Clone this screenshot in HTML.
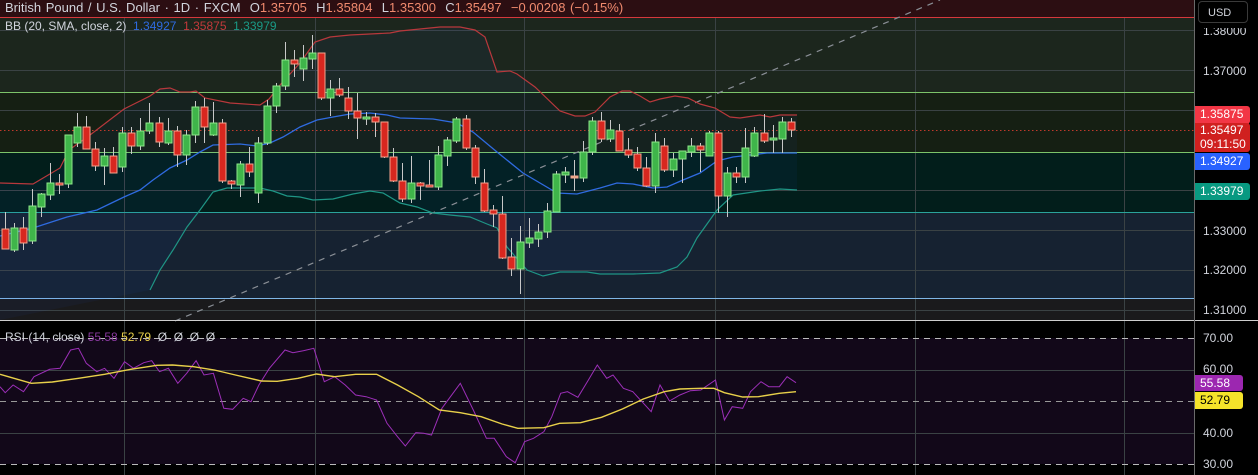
<!DOCTYPE html>
<html><head><meta charset="utf-8">
<style>
html,body{margin:0;padding:0;background:#000;width:1258px;height:475px;overflow:hidden;font-family:"Liberation Sans",sans-serif;}
#w{position:relative;width:1258px;height:475px;}
svg{position:absolute;left:0;top:0;}
.t{position:absolute;font-size:12px;color:#d1d4dc;white-space:nowrap;line-height:14px;}
.ax{position:absolute;left:1203px;font-size:12px;color:#d1d4dc;line-height:14px;}
.tag{position:absolute;left:1195px;width:55px;font-size:12px;color:#fff;padding-left:5px;box-sizing:border-box;border-radius:0 3px 3px 0;line-height:17px;}
</style></head><body><div id="w">
<svg id="s" width="1258" height="475" xmlns="http://www.w3.org/2000/svg">
<rect x="0" y="0" width="1258" height="475" fill="#000"/>
<rect x="0" y="0" width="1194" height="17" fill="#2c0e12"/>
<rect x="0" y="17" width="1194" height="75" fill="#1c261d"/>
<rect x="0" y="92" width="1194" height="60" fill="#151f13"/>
<rect x="0" y="152" width="1194" height="60" fill="#021e1b"/>
<rect x="0" y="212" width="1194" height="86" fill="#162231"/>
<rect x="0" y="298" width="1194" height="23" fill="#1a1a1c"/>
<rect x="0" y="338" width="1194" height="126" fill="#120819"/>
<g id="grid" stroke="#3a4244" stroke-width="1"></g>
<line x1="0" y1="17.5" x2="1194" y2="17.5" stroke="#d6383c"/>
<line x1="0" y1="92.5" x2="1194" y2="92.5" stroke="#7cc46a"/>
<line x1="0" y1="152.5" x2="1194" y2="152.5" stroke="#7cc46a"/>
<line x1="0" y1="212.5" x2="1194" y2="212.5" stroke="#2aa39a"/>
<line x1="0" y1="298.5" x2="1194" y2="298.5" stroke="#7fb6e6"/>
<path id="fill" fill="rgba(41,98,255,0.05)" stroke="none"/>
<line x1="175" y1="321" x2="940" y2="0" stroke="#8a8f96" stroke-dasharray="6,6" stroke-width="1.2"/>
<line x1="0" y1="130.5" x2="1194" y2="130.5" stroke="#c0392b" stroke-dasharray="1.5,2.5"/>
<polyline id="up" fill="none" stroke="#b8383c" stroke-width="1.2"/>
<polyline id="mid" fill="none" stroke="#2f6be0" stroke-width="1.3"/>
<polyline id="lo" fill="none" stroke="#1f9585" stroke-width="1.2"/>
<g id="c"></g>
<line x1="0" y1="338.5" x2="1194" y2="338.5" stroke="#bbb" stroke-dasharray="6,5"/>
<line x1="0" y1="401.5" x2="1194" y2="401.5" stroke="#999" stroke-dasharray="6,5"/>
<line x1="0" y1="464.5" x2="1194" y2="464.5" stroke="#bbb" stroke-dasharray="6,5"/>
<polyline id="rsi" fill="none" stroke="#9c2fb8" stroke-width="1"/>
<polyline id="ma" fill="none" stroke="#e8d04a" stroke-width="1.4"/>
<line x1="0" y1="320.5" x2="1258" y2="320.5" stroke="#cfcfcf"/>
<line x1="1194.5" y1="0" x2="1194.5" y2="475" stroke="#6a6a6a"/>
</svg>
<div class="t" style="left:5px;top:1px;font-size:13px;word-spacing:1px;">British Pound / U.S. Dollar · 1D · FXCM &nbsp;O<span style="color:#f08a6e">1.35705</span> &nbsp;H<span style="color:#f08a6e">1.35804</span> &nbsp;L<span style="color:#f08a6e">1.35300</span> &nbsp;C<span style="color:#f08a6e">1.35497</span> &nbsp;<span style="color:#f08a6e">−0.00208 (−0.15%)</span></div>
<div class="t" style="left:5px;top:19px;">BB (20, SMA, close, 2) &nbsp;<span style="color:#2f6be0">1.34927</span> &nbsp;<span style="color:#c3393b">1.35875</span> &nbsp;<span style="color:#1a9a86">1.33979</span></div>
<div class="t" style="left:5px;top:330px;font-size:12px;">RSI (14, close) <span style="color:#8a3aa0">55.58</span> <span style="color:#e8d04a">52.79</span> &nbsp;Ø &nbsp;Ø &nbsp;Ø &nbsp;Ø</div>
<div style="position:absolute;left:1198px;top:1px;width:50px;height:22px;border:1px solid #3a3a3a;border-radius:4px;background:#000;color:#d1d4dc;font-size:11px;line-height:22px;padding-left:9px;box-sizing:border-box;">USD</div>
<div class="ax" style="top:24px;clip-path:inset(4px 0 0 0);">1.38000</div>
<div class="ax" style="top:64px;">1.37000</div>
<div class="ax" style="top:224px;">1.33000</div>
<div class="ax" style="top:263px;">1.32000</div>
<div class="ax" style="top:303px;">1.31000</div>
<div class="tag" style="top:106px;height:18px;background:#f23645;">1.35875</div>
<div class="tag" style="top:123px;height:29px;background:#d0201f;line-height:13.5px;padding-top:1px;">1.35497<br>09:11:50</div>
<div class="tag" style="top:153px;height:17px;background:#2962ff;">1.34927</div>
<div class="tag" style="top:183px;height:17px;background:#089981;">1.33979</div>
<div class="ax" style="top:331px;">70.00</div>
<div class="ax" style="top:362px;">60.00</div>
<div class="tag" style="top:375px;height:16px;background:#9c27b0;line-height:16px;width:48px;">55.58</div>
<div class="tag" style="top:392px;height:17px;background:#f5e32a;color:#000;width:48px;">52.79</div>
<div class="ax" style="top:426px;">40.00</div>
<div class="ax" style="top:457px;">30.00</div>
</div>
<script>
var NS="http://www.w3.org/2000/svg";
function el(p,t,a){var e=document.createElementNS(NS,t);for(var k in a)e.setAttribute(k,a[k]);p.appendChild(e);return e;}
var g=document.getElementById('grid');
[30,70,110,190,230,270,310,370,433].forEach(function(y){el(g,'line',{x1:0,x2:1194,y1:y+.5,y2:y+.5});});
[124,315,524,715,915,1124].forEach(function(x){el(g,'line',{x1:x+.5,x2:x+.5,y1:17,y2:475});});
var C=[[229,249,212,249,'r'],[228,250,223,252,'g'],[228,243,217,250,'r'],[206,241,189,244,'g'],[194,207,193,217,'g'],[183,195,163,200,'g'],[183,184,174,194,'r'],[135,184,135,188,'g'],[127,143,113,147,'g'],[127,149,116,149,'r'],[149,166,142,171,'r'],[156,166,148,185,'g'],[156,173,147,173,'r'],[133,167,127,172,'g'],[133,146,127,154,'r'],[131,146,118,150,'g'],[123,131,103,134,'g'],[123,142,117,147,'r'],[131,143,118,145,'g'],[131,155,126,167,'r'],[135,155,130,165,'g'],[107,135,101,143,'g'],[107,127,98,143,'r'],[123,135,102,136,'g'],[123,181,119,183,'r'],[181,184,180,189,'r'],[164,185,161,197,'g'],[164,172,147,177,'r'],[143,193,137,203,'g'],[106,143,100,145,'g'],[86,106,83,113,'g'],[60,86,42,90,'g'],[60,64,50,77,'r'],[58,69,45,81,'g'],[53,59,35,69,'g'],[53,98,53,100,'r'],[89,98,80,116,'g'],[89,95,78,97,'r'],[98,111,87,119,'r'],[111,118,93,139,'r'],[117,118,112,125,'g'],[117,122,113,137,'r'],[122,157,122,158,'r'],[157,181,148,182,'r'],
[181,199,163,202,'r'],[183,199,156,203,'g'],[183,186,182,200,'r'],[185,187,160,187,'r'],[155,187,146,190,'g'],[140,156,137,166,'g'],[119,141,117,143,'g'],[119,148,115,150,'r'],[148,177,145,184,'r'],[183,211,169,212,'r'],[210,214,205,227,'r'],[214,258,196,259,'r'],[257,269,238,276,'r'],[242,269,226,294,'g'],[238,243,218,248,'g'],[232,239,224,247,'g'],[211,232,203,238,'g'],[174,212,171,212,'g'],[172,175,167,183,'g'],[176,178,160,191,'d'],[152,178,141,182,'g'],[121,152,117,155,'g'],[121,139,112,142,'r'],[130,139,120,142,'g'],[131,151,124,151,'r'],[150,155,138,158,'r'],[154,168,147,171,'r'],[168,186,157,187,'r'],[142,186,133,193,'g'],[146,170,138,172,'r'],[159,170,153,177,'g'],[151,159,151,183,'g'],[146,152,138,157,'g'],[146,150,143,172,'r'],[133,156,131,156,'g'],[133,196,131,213,'r'],[173,196,167,217,'g'],[173,177,167,183,'r'],[148,177,128,183,'g'],[133,156,127,157,'g'],[133,141,114,143,'r'],[138,139,125,153,'g'],[122,139,117,153,'g'],[122,130,118,137,'r']];
var cg=document.getElementById('c');
C.forEach(function(c,i){var x=5+9.03*i;var xr=Math.round(x);
el(cg,'line',{x1:xr+.5,x2:xr+.5,y1:c[2],y2:c[3],stroke:'#c8c8c8','stroke-width':1});
var fill=c[4]=='g'?'#3fb54a':(c[4]=='r'?'#d8271f':'#e9b08a');var st=c[4]=='g'?'#8ee68a':'#f3a38e';
var h=Math.max(c[1]-c[0],2);
el(cg,'rect',{x:xr-3,y:c[0],width:7,height:h,fill:fill,stroke:st,'stroke-width':1});});
function pts(a){return a.map(function(p){return p[0]+','+p[1]}).join(' ');}
var U=[[0,183],[33,184],[60,168],[69,150],[90,135],[124,109],[150,96],[160,89],[170,88],[180,92],[190,92],[196,91],[205,98],[230,103],[260,105],[269,99],[280,85],[300,63],[315,42],[330,37],[350,35],[370,34],[390,33],[400,31],[420,29],[440,27],[460,27],[475,30],[485,37],[497,72],[510,71],[517,74],[535,87],[560,111],[575,116],[585,116],[595,112],[610,97],[622,91],[630,91],[640,96],[650,102],[660,99],[675,96],[688,98],[700,104],[715,108],[730,117],[740,118],[760,115],[770,117],[780,115],[797,115]];
var M=[[0,236],[33,228],[67,217],[97,210],[124,197],[140,190],[153,180],[170,168],[187,160],[200,152],[213,145],[240,144],[257,146],[270,143],[283,137],[300,127],[317,120],[333,117],[350,114],[370,113],[387,115],[400,118],[433,119],[457,123],[473,132],[497,152],[523,173],[557,193],[577,194],[600,188],[617,183],[633,184],[653,188],[667,187],[683,180],[700,173],[717,161],[733,157],[767,153],[797,153]];
var L=[[150,290],[160,270],[173,250],[187,227],[200,210],[213,192],[227,188],[240,188],[260,188],[273,191],[287,196],[300,197],[313,200],[333,199],[353,194],[370,191],[383,193],[400,203],[417,207],[433,213],[450,215],[470,217],[487,224],[497,228],[507,247],[527,270],[543,276],[560,272],[587,272],[600,274],[633,274],[660,273],[677,267],[687,257],[697,238],[717,210],[733,195],[760,191],[780,189],[797,190]];
document.getElementById('up').setAttribute('points',pts(U));
document.getElementById('mid').setAttribute('points',pts(M));
document.getElementById('lo').setAttribute('points',pts(L));
document.getElementById('fill').setAttribute('d','M'+pts(U)+' L'+pts(L.slice().reverse())+' L0,320 Z');
function cv(a){return a.map(function(p){return (p[0]/1.912).toFixed(1)+','+(320+p[1]/3).toFixed(1)}).join(' ');}
var R=[[0,200],[10,218],[25,195],[45,215],[65,170],[95,148],[115,145],[135,90],[150,85],[165,130],[185,155],[200,145],[218,175],[238,125],[255,145],[275,128],[290,122],[305,155],[322,145],[340,190],[357,160],[375,122],[390,165],[408,160],[428,265],[445,268],[465,235],[480,245],[495,195],[515,145],[545,90],[560,98],[580,92],[600,85],[620,185],[640,170],[660,195],[680,225],[700,230],[720,240],[740,310],[760,350],[775,378],[795,338],[810,340],[825,345],[845,265],[880,190],[905,270],[930,355],[945,355],[968,410],[985,428],[1003,365],[1020,355],[1040,335],[1055,290],[1072,220],[1085,215],[1105,232],[1125,180],[1142,135],[1160,175],[1172,165],[1192,205],[1210,215],[1245,275],[1262,195],[1280,243],[1300,225],[1320,212],[1340,210],[1368,180],[1385,300],[1400,260],[1420,265],[1435,215],[1455,185],[1470,200],[1490,200],[1505,170],[1522,188]];
var Y=[[0,163],[20,172],[60,190],[100,186],[150,175],[200,163],[250,148],[300,136],[330,135],[370,140],[410,150],[450,165],[500,183],[530,184],[570,175],[605,162],[640,170],[680,163],[720,163],[760,195],[800,230],[840,270],[880,278],[920,290],[960,312],[990,325],[1040,323],[1070,310],[1110,308],[1150,292],[1190,267],[1230,237],[1270,215],[1300,207],[1340,205],[1365,205],[1385,218],[1420,231],[1450,230],[1490,220],[1522,215]];
document.getElementById('rsi').setAttribute('points',cv(R));
document.getElementById('ma').setAttribute('points',cv(Y));
</script>
</body></html>
